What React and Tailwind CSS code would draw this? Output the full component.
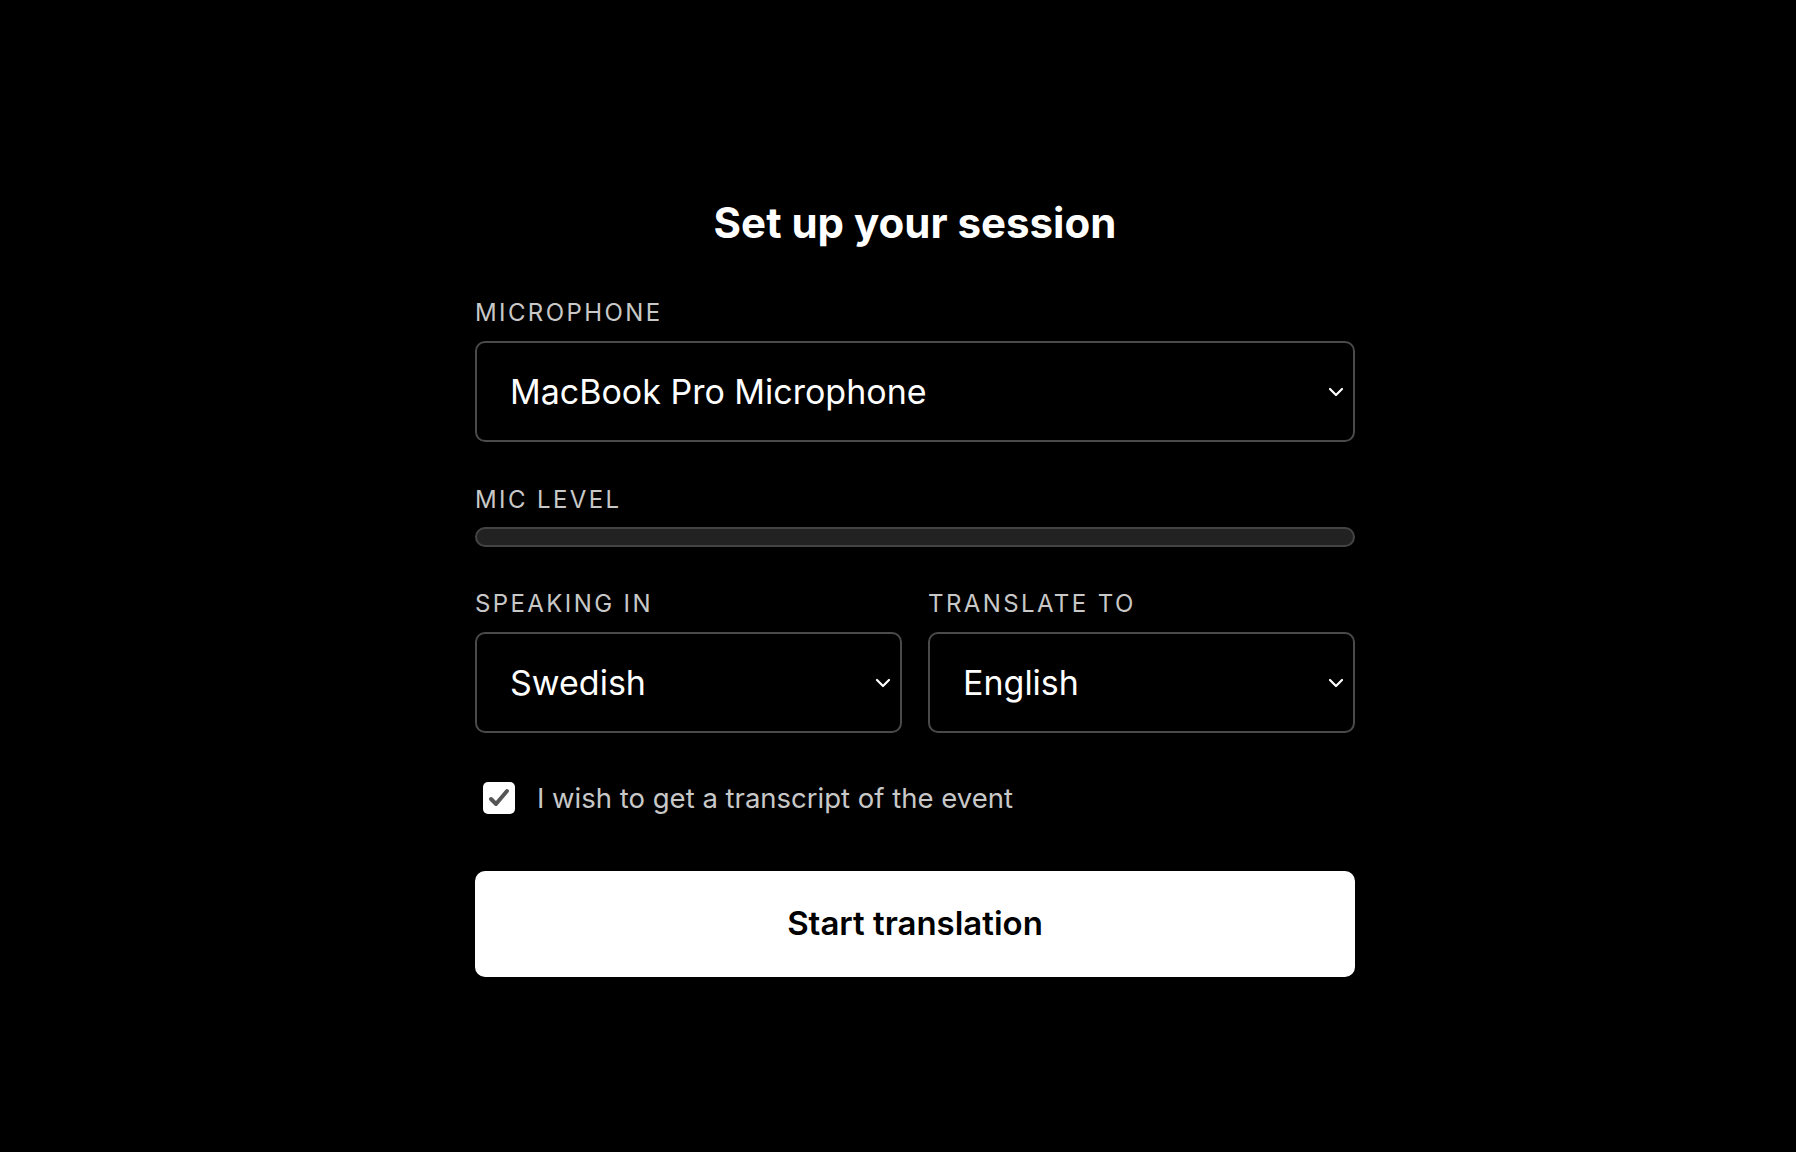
import { useState } from 'react';

function Chevron() {
    return (
        <svg width="16" height="10" viewBox="0 0 16 10" fill="none" className="pointer-events-none absolute right-[11px] top-1/2 -translate-y-1/2">
            <path d="M2 2l6 6 6-6" stroke="white" strokeWidth="2.2" strokeLinecap="round" strokeLinejoin="round" />
        </svg>
    );
}

function Select({ value, options, onChange }) {
    return (
        <div className="relative">
            <select
                value={value}
                onChange={(e) => onChange(e.target.value)}
                className="appearance-none w-full h-[101px] pl-[33px] pr-12 bg-black text-white text-[34px] border-2 border-[#4a4a4a] rounded-[10px] outline-none"
            >
                {options.map((o) => (
                    <option key={o} value={o}>{o}</option>
                ))}
            </select>
            <Chevron />
        </div>
    );
}

function Label({ children }) {
    return <div className="text-[24px] leading-[32px] tracking-[0.1em] text-[#c8c8c8] uppercase">{children}</div>;
}

export default function App() {
    const [mic, setMic] = useState('MacBook Pro Microphone');
    const [from, setFrom] = useState('Swedish');
    const [to, setTo] = useState('English');
    const [transcript, setTranscript] = useState(true);

    return (
        <div className="min-h-screen bg-black flex justify-center pl-[34px]" style={{ fontFamily: 'Inter, "Noto Sans", sans-serif' }}>
            <div className="w-[880px] pt-[199px]">
                <h1 className="text-[42px] leading-[48px] font-bold text-white text-center">Set up your session</h1>

                <div className="mt-[50px]">
                    <Label>Microphone</Label>
                    <div className="mt-[12px]">
                        <Select value={mic} options={['MacBook Pro Microphone', 'External Microphone']} onChange={setMic} />
                    </div>
                </div>

                <div className="mt-[42px]">
                    <Label>Mic level</Label>
                    <div className="mt-[11px] h-[20px] rounded-full bg-[#222] border-2 border-[#444]" />
                </div>

                <div className="mt-[41px] flex gap-[26px]">
                    <div className="flex-1">
                        <Label>Speaking in</Label>
                        <div className="mt-[12px]">
                            <Select value={from} options={['Swedish', 'English', 'German']} onChange={setFrom} />
                        </div>
                    </div>
                    <div className="flex-1">
                        <Label>Translate to</Label>
                        <div className="mt-[12px]">
                            <Select value={to} options={['English', 'Swedish', 'German']} onChange={setTo} />
                        </div>
                    </div>
                </div>

                <label className="mt-[45px] ml-[8px] flex items-center gap-[22px] cursor-pointer">
                    <span
                        onClick={() => setTranscript(!transcript)}
                        className="w-[32px] h-[32px] rounded-[5px] bg-white flex items-center justify-center"
                    >
                        {transcript && (
                            <svg width="22" height="20" viewBox="0 0 22 20" fill="none">
                                <path d="M3 11l5 5L19 3" stroke="#555" strokeWidth="4" strokeLinecap="round" strokeLinejoin="round" />
                            </svg>
                        )}
                    </span>
                    <span className="text-[27.5px] leading-[40px] text-[#c8c8c8]">I wish to get a transcript of the event</span>
                </label>

                <button className="mt-[53px] w-full h-[106px] bg-white rounded-[10px] text-black text-[33px] font-semibold">
                    Start translation
                </button>
            </div>
        </div>
    );
}
